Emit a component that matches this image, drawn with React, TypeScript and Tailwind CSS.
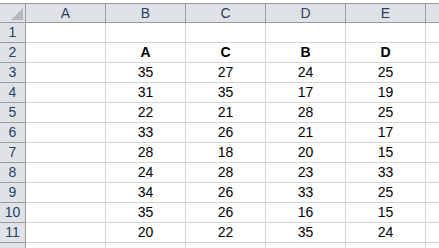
import React from "react";

const cols = ["A", "B", "C", "D", "E"];

const rows: (string | number)[][] = [
  ["", "", "", "", ""],
  ["", "A", "C", "B", "D"],
  ["", 35, 27, 24, 25],
  ["", 31, 35, 17, 19],
  ["", 22, 21, 28, 25],
  ["", 33, 26, 21, 17],
  ["", 28, 18, 20, 15],
  ["", 24, 28, 23, 33],
  ["", 34, 26, 33, 25],
  ["", 35, 26, 16, 15],
  ["", 20, 22, 35, 24],
  ["", "", "", "", ""],
];

export default function App() {
  return (
    <div
      className="w-[439px] h-[248px] overflow-hidden bg-white text-[14px] text-black"
      style={{ fontFamily: '"Liberation Sans", Arial, sans-serif' }}
    >
      <div className="h-[3px] bg-white" />
      <div className="grid grid-cols-[26px_repeat(5,80px)_1fr]">
        {/* header row */}
        <div className="relative h-[20px] bg-[#dfe3e8] border-t border-b border-r border-[#9c9c9c]">
          <div className="absolute right-[2px] bottom-[2px] w-0 h-0 border-l-[12px] border-l-transparent border-b-[12px] border-b-[#b5b8bc]" />
        </div>
        {cols.map((c) => (
          <div
            key={c}
            className="h-[20px] bg-[#dfe3e8] border-t border-b border-r border-[#9c9c9c] flex items-center justify-center text-[#27415f]"
          >
            {c}
          </div>
        ))}
        <div className="h-[20px] bg-[#dfe3e8] border-t border-b border-[#9c9c9c]" />

        {rows.map((r, i) => (
          <React.Fragment key={i}>
            <div className="h-[20px] bg-[#dfe3e8] border-b border-r border-[#9c9c9c] flex items-center justify-center text-[#27415f]">
              {i < 11 ? i + 1 : ""}
            </div>
            {r.map((v, j) => (
              <div
                key={j}
                className={`h-[20px] border-b border-r border-[#d4d4d4] flex items-center justify-center ${
                  i === 1 ? "font-bold" : ""
                }`}
              >
                {v}
              </div>
            ))}
            <div className="h-[20px] border-b border-[#d4d4d4]" />
          </React.Fragment>
        ))}
      </div>
    </div>
  );
}
